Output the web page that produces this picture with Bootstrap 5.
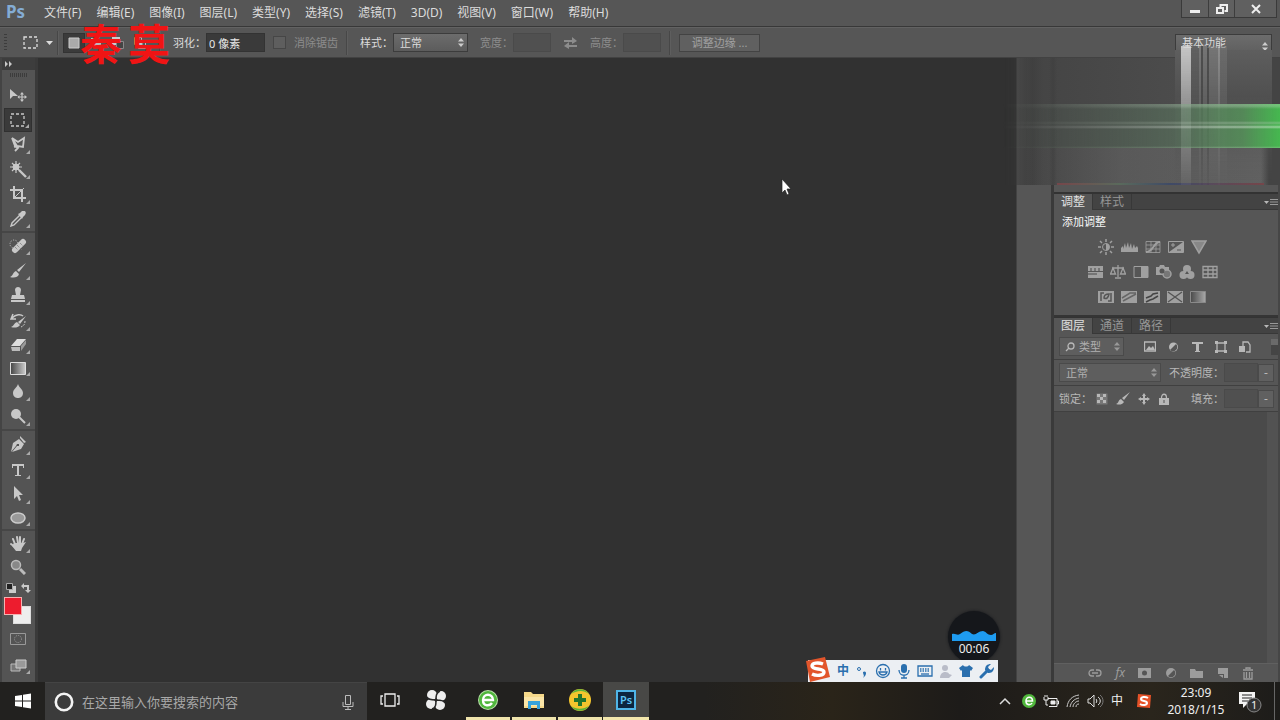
<!DOCTYPE html>
<html lang="zh-CN">
<head>
<meta charset="utf-8">
<meta name="viewport" content="width=device-width, initial-scale=1">
<title>Ps</title>
<link href="https://cdn.jsdelivr.net/npm/bootstrap@5.3.0/dist/css/bootstrap.min.css" rel="stylesheet">
<style>
:root{--ui:#565656;--edge:#333;--ink:#dcdcdc;--dim:#8c8c8c}
body{font:12px/16px "Noto Sans","Noto Sans CJK SC",sans-serif;color:var(--ink);background:#313131}
button,input,select{font:inherit;color:inherit}
button{background:none;border:0;padding:0}
svg{display:block;flex:none}
:where(svg:not([fill])){fill:none}
.i{fill:currentColor}
.l{stroke:currentColor;stroke-width:1.3}
a{color:inherit;text-decoration:none}
/* menu bar */
.menubar{height:27px;background:var(--ui);border-bottom:1px solid #383838}
.logo-ps{font:bold 17px/24px "Noto Sans",sans-serif;color:#84acd4;width:36px;padding-left:6px}
.menus{gap:15px;padding-top:5px}
.winbtns{height:18px;border:1px solid #3a3a3a;border-top:0;margin-right:3px;color:#eee;background:#606060}
.winbtns button{width:26px;height:17px}
.winbtns button+button{border-left:1px solid #3d3d3d}
.winbtns button:last-child{width:42px}
/* options bar */
.options{height:31px;background:var(--ui);border-top:1px solid #626262;border-bottom:1px solid #424242}
.grip{width:3px;height:18px;background:repeating-linear-gradient(#3c3c3c 0 1px,transparent 1px 3px)}
.vsep{width:2px;height:24px;background:#474747;border-right:1px solid #5e5e5e}
.mode{width:22px;height:20px}
.mode.on{background:#3b3b3b;border:1px solid #333}
.dark-in{background:#3a3a3a;border:1px solid #333;height:19px;padding:0 2px;color:#e8e8e8;min-width:0}
.dark-in:disabled{background:#505050;border-color:#4a4a4a}
.sel{appearance:none;height:19px;border:1px solid #3c3c3c;padding:0 6px;line-height:16px;background:url("data:image/svg+xml,%3Csvg xmlns='http://www.w3.org/2000/svg' width='6' height='9'%3E%3Cpath d='M0 3.500l3-3.500 3 3.500zM0 5.500h6l-3 3.500z' fill='%23ccc'/%3E%3C/svg%3E") no-repeat right 3px center,linear-gradient(#6c6c6c,#5c5c5c)}
.sel.soft{color:#b0b0b0;border-color:#4a4a4a;background:url("data:image/svg+xml,%3Csvg xmlns='http://www.w3.org/2000/svg' width='6' height='9'%3E%3Cpath d='M0 3.500l3-3.500 3 3.500zM0 5.500h6l-3 3.500z' fill='%23999'/%3E%3C/svg%3E") no-repeat right 3px center,#5e5e5e}
.tick{appearance:none;width:13px;height:13px;background:#5e5e5e;border:1px solid #464646}
.off{color:var(--dim)}
.fs-11{font-size:11px}
.swap{margin:0 13px}
.refine{width:81px;height:18px;border:1px solid #434343;background:#606060;color:#a0a0a0;font-size:11px;line-height:15px}
/* watermark */
.stamp{left:80px;top:10px;font:bold 42px/64px "Noto Sans CJK SC",sans-serif;color:#f01414;pointer-events:none;z-index:5;gap:6px}
/* tool column */
.tools{width:38px;background:#545454;border-left:2px solid #444;border-right:3px solid #3a3a3a;color:#c8c8c8}
.tools-top{height:12px;background:#3d3d3d}
.tools-grip{width:18px;height:4px;margin:3px auto 6px;background:repeating-linear-gradient(90deg,#3c3c3c 0 1px,transparent 1px 2px)}
.tg{border-bottom:2px solid #464646}
.tg button,.tool{position:relative;width:28px;margin-left:2px;display:flex;align-items:center;justify-content:center}
.tg button::after,.tool.more::after{content:"";position:absolute;right:2px;bottom:3px;border:2px solid transparent;border-right-color:#aaa;border-bottom-color:#aaa}
.tg .plain::after{display:none}
.tg button.on{background:#3a3a3a;border:1px solid #303030}
.g6{height:150px}.g8{height:198px}.g4{height:100px}.g2{height:48px;border:0}
.swatches{height:28px;width:32px}
.fore,.back{position:absolute;width:18px;height:18px;border:1px solid #ddd}
.fore{left:2px;top:0;background:#ed1c2e;border-color:#f6b0b0;z-index:1}
.back{left:11px;top:9px;background:#eee}
/* canvas */
.canvas{background:#313131;min-width:0}
.pointer{left:743px;top:120px}
.timer{right:16px;bottom:19px;width:52px;height:52px;border-radius:50%;background:#15171b;box-shadow:0 0 3px #15171b;color:#eee;text-align:center;padding-top:20px}
.ime{right:18px;bottom:0;height:22px;width:190px;background:#eceff3;color:#2a6fae;padding-left:26px;padding-right:1px}
.ime-logo{left:-5px;top:-4px}
/* dock */
.strip{width:38px;background:#565656;border-left:1px solid #424242;border-right:3px solid #3a3a3a}
.dock{width:226px;background:var(--ui);border-right:2px solid #464646;color:#b8b8b8}
.top-panel{height:135px;border-bottom:1px solid #333}
.tabs{height:17px;background:#434343;border-top:1px solid #333;border-bottom:1px solid #383838}
.tabs button{height:16px;padding:0 7px;color:#969696;line-height:16px;border-right:1px solid #383838}
.tabs button.on{background:var(--ui);color:#e0e0e0}
.adjust{height:107px;border-bottom:2px solid #353535;gap:9px}
.adj-icons{gap:7px;height:16px;margin-right:28px;color:#a0a0a0}
.prow{height:26px;border-bottom:1px solid #404040;padding-left:5px}
.drop{width:16px;height:18px;border:1px solid #4a4a4a;background:#606060}
.switch-v{width:7px;height:16px;background:linear-gradient(#6a6a6a 40%,#454545 40%)}
.list{background:#4a4a4a;border-right:11px solid #525252}
.pfoot{height:19px;border-top:1px solid #606060;color:#9c9c9c;padding:0 24px 0 34px}
/* streaked screen area */
.streak{right:0;top:58px;width:277px;height:127px;z-index:3;pointer-events:none;
background:
 linear-gradient(90deg,#75464a,#5a6a5c 30%,#3f4a66 55%,#75464a) 54px 125px/207px 2px no-repeat,
 linear-gradient(90deg,transparent 0 46px,rgba(60,60,60,.5) 50px,transparent 54px),
 linear-gradient(90deg,transparent 258px,#444 266px) no-repeat,
 linear-gradient(90deg,transparent 20px,rgba(120,120,120,.35) 120px) 0 90px/100% 37px no-repeat,
 linear-gradient(90deg,#313131 0,#454545 40px,#4c4c4c 180px,#565656);
-webkit-mask-image:linear-gradient(90deg,transparent,#000 30px);mask-image:linear-gradient(90deg,transparent,#000 30px)}
.bars{right:53px;top:46px;width:46px;height:139px;z-index:4;pointer-events:none;
background:linear-gradient(90deg,rgba(215,215,215,.85) 0 10px,rgba(100,100,100,.3) 10px 18px,rgba(160,160,160,.4) 18px 20px,rgba(60,60,60,.5) 20px 22px,rgba(150,150,150,.4) 22px 26px,rgba(60,60,60,.5) 26px 28px,rgba(150,150,150,.4) 28px 37px,rgba(190,190,190,.5) 37px 39px,rgba(120,120,120,.5) 39px);
-webkit-mask-image:linear-gradient(#000,rgba(0,0,0,.5) 50%,rgba(0,0,0,.08));mask-image:linear-gradient(#000,rgba(0,0,0,.5) 50%,rgba(0,0,0,.08))}
.glow{right:0;top:104px;width:277px;height:44px;z-index:4;pointer-events:none;
background:linear-gradient(rgba(210,230,210,.3) 0 2px,transparent 5px 17px,rgba(180,200,180,.4) 19px,transparent 21px,rgba(230,240,230,.5) 23px,transparent 25px 42px,rgba(170,210,170,.4)),linear-gradient(90deg,rgba(80,110,80,.3),rgba(90,115,95,.65) 60px,rgba(90,120,95,.7) 170px,rgba(85,150,90,.8) 240px,#46b850);
-webkit-mask-image:linear-gradient(90deg,transparent,#000 220px);mask-image:linear-gradient(90deg,transparent,#000 220px)}
.workspace-sel{width:97px;height:23px;padding-bottom:7px;border-bottom:0}
.workspace-tail{right:8px;top:50px;width:97px;height:130px;z-index:3;background:linear-gradient(#5e5e5e,#505050 35%,rgba(95,95,95,.3));-webkit-mask-image:linear-gradient(#000 50%,transparent);mask-image:linear-gradient(#000 50%,transparent)}
/* taskbar */
.taskbar{height:38px;background:linear-gradient(90deg,#22211f 0 55%,#2a2419 65%,#1d1b19 75%,#2a251c 90%,#1d1c1a);color:#f0f0f0}
.start{width:45px}
.search{width:322px;background:#3b3b3b;border-top:1px solid #444;padding:0 10px 0 9px;gap:8px}
.search input{background:none;border:0;font-size:13px;min-width:0;outline:0;padding:0}
.search input::placeholder{color:#a8a8a8;opacity:1}
.app{width:46px;border-bottom:3px solid transparent}
.pinned{margin-right:6px}
.app.open{border-image:linear-gradient(90deg,transparent 4px,#efe3ab 4px 42px,transparent 42px) 3}
.app.on{background:#484846;border-bottom-color:#f3e7ac}
.app-ps{width:20px;height:20px;background:#0c2540;border:2px solid #4fb5e8;color:#5cc4f6;font-weight:600;font-size:11px;line-height:15px}
.tray{padding-right:5px}
.tray-ico{width:22px}
.notes{margin:0 12px 0 4px}
.peek{width:1px;background:#666}
.clock{width:76px;line-height:17px}
</style>
</head>
<body class="vh-100 d-flex flex-column overflow-hidden position-relative">
<header class="menubar d-flex align-items-start">
 <span class="logo-ps">Ps</span>
 <nav class="menus d-flex flex-fill ps-2 text-nowrap" aria-label="菜单">
  <a href="#">文件(F)</a><a href="#">编辑(E)</a><a href="#">图像(I)</a><a href="#">图层(L)</a><a href="#">类型(Y)</a><a href="#">选择(S)</a><a href="#">滤镜(T)</a><a href="#">3D(D)</a><a href="#">视图(V)</a><a href="#">窗口(W)</a><a href="#">帮助(H)</a>
 </nav>
 <div class="winbtns d-flex">
  <button aria-label="最小化"><svg class="i mx-auto" width="12" height="12"><path d="M1 7h10v3H1z"/></svg></button>
  <button aria-label="还原"><svg class="mx-auto" width="12" height="12" stroke="currentColor" stroke-width="2"><path d="M4.500 4V2H11v6H8.500M1 5h6v5H1z"/></svg></button>
  <button aria-label="关闭"><svg class="mx-auto" width="12" height="12" stroke="currentColor" stroke-width="2"><path d="M2 2l8 8M10 2l-8 8"/></svg></button>
 </div>
</header>

<div class="options d-flex align-items-center text-nowrap">
 <span class="grip ms-1"></span>
 <svg class="ms-3 l" width="15" height="13"><rect x="1" y="1" width="13" height="11" stroke-dasharray="3 2"/></svg>
 <svg class="i ms-2" width="7" height="4"><path d="M0 0h7L3.500 4z"/></svg>
 <span class="vsep ms-1 me-1"></span>
 <button class="mode on" aria-label="新选区"><svg class="mx-auto" width="12" height="12"><path d="M1 1h10v10H1z" fill="#aaa" stroke="#ccc"/></svg></button>
 <button class="mode" aria-label="添加"><svg class="mx-auto" width="12" height="12"><path d="M1 1h7v3h3v7H4V8H1z" fill="#bbb"/></svg></button>
 <button class="mode" aria-label="减去"><svg class="mx-auto" width="12" height="12"><path d="M0 0h8v4H4v4H0z" fill="#ccc"/><path d="M4.500 4.500h7v7h-7z" fill="#444" stroke="#888"/></svg></button>
 <button class="mode" aria-label="交叉"><svg class="mx-auto" width="12" height="12" stroke="#bbb"><path d="M.5.500h7v7h-7zM4.500 4.500h7v7h-7z"/><path d="M4 4h4v4H4z" fill="#ccc"/></svg></button>
 <span class="vsep ms-2 me-2"></span>
 <label for="feather" class="ps-1 fs-11">羽化：</label>
 <input id="feather" class="dark-in fs-11" value="0 像素" style="width:59px">
 <input id="aa" type="checkbox" class="tick ms-2" disabled><label for="aa" class="off fs-11 ms-1 ps-1">消除锯齿</label>
 <span class="vsep ms-2 me-2"></span>
 <label for="style" class="fs-11 ps-1">样式：</label>
 <select id="style" class="sel fs-11" style="width:75px"><option>正常</option></select>
 <label for="w" class="off ms-2 ps-1 fs-11">宽度：</label><input id="w" class="dark-in" style="width:38px" disabled>
 <svg class="off i swap" width="13" height="12"><path d="M0 3h8V0l5 4-5 3V5H0zM13 8H5V5L0 9l5 3v-2h8z"/></svg>
 <label for="h" class="off fs-11">高度：</label><input id="h" class="dark-in" style="width:38px" disabled>
 <span class="vsep ms-2 me-2"></span>
 <button class="refine">调整边缘 ...</button>
 <select class="sel workspace-sel fs-11 ms-auto me-2 align-self-end" aria-label="工作区"><option>基本功能</option></select>
</div>
<div class="stamp position-absolute d-flex"><span>秦</span><span>莫</span></div>

<main class="d-flex flex-fill" style="min-height:0">
 <aside class="tools d-flex flex-column">
  <div class="tools-top"><svg class="i" width="12" height="12"><path d="M3 3l3 3-3 3zM7 3l3 3-3 3z"/></svg></div>
  <div class="tools-grip"></div>
  <div class="tg g6 d-flex flex-column">
   <button class="plain flex-fill" aria-label="移动"><svg class="i" width="18" height="16"><path d="M1 2v10l3-3h5z"/><path d="M13 5l2 2.500h-1.400v2h2V8L18 10l-2.400 2v-1.400h-2v2H15L13 15l-2-2.400h1.400v-2h-2V12L8.500 10l1.900-2v1.500h2v-2H11z"/></svg></button>
   <button class="on flex-fill" aria-label="矩形选框"><svg class="l" width="16" height="14"><rect x="1" y="1" width="13" height="12" stroke-dasharray="3 2"/></svg></button>
   <button class="flex-fill" aria-label="套索"><svg width="16" height="16" stroke="currentColor" stroke-width="1.800"><path d="M2 2l6 4 6-4-1 9-6-1zM2 2l3 8 3 2-3 3M7 10l-3 1"/></svg></button>
   <button class="flex-fill" aria-label="魔棒"><svg width="17" height="17" stroke="currentColor"><circle cx="6" cy="6" r="3" fill="currentColor"/><path stroke-width="1.200" d="M6 0v12M0 6h12M2 2l8 8M10 2l-8 8"/><path stroke-width="2.400" d="M9 9l7 7"/></svg></button>
   <button class="flex-fill" aria-label="裁剪"><svg width="16" height="16" stroke="currentColor" stroke-width="2"><path d="M4 0v12h12M0 4h12v12"/><path d="M5 11l9-9" stroke-width="1"/></svg></button>
   <button class="flex-fill" aria-label="吸管"><svg width="16" height="16"><path d="M10 4L2 12l-1 3 3-1 8-8" stroke="currentColor" stroke-width="1.400"/><path class="i" d="M8 3l2-1 2-2c3-1 5 1 3 4l-2 2-1 2z"/></svg></button>
  </div>
  <div class="tg g8 d-flex flex-column">
   <button class="flex-fill" aria-label="修复画笔"><svg width="18" height="16"><circle cx="5" cy="6" r="4" stroke="currentColor" stroke-dasharray="1 1.500"/><path d="M6 12l8-8" stroke="currentColor" stroke-width="6" stroke-linecap="round"/><path d="M8 7l5 5M11 5l3 3M6 9l3 3" stroke="#777" stroke-dasharray="1 1"/></svg></button>
   <button class="flex-fill" aria-label="画笔"><svg class="i" width="18" height="15"><path d="M17 0L10 9 8 7zM7 8l3 3c-1 4-6 4-9 3 3-1 3-5 6-6z"/></svg></button>
   <button class="flex-fill" aria-label="图章"><svg class="i" width="16" height="16"><path d="M6 8L5 3c0-4 6-4 6 0l-1 5h4l1 4H1l1-4zM1 13h14v2H1z"/></svg></button>
   <button class="flex-fill" aria-label="历史画笔"><svg width="17" height="16"><path d="M2 5c4-4 9-4 11-2M3 1L1 6h5" stroke="currentColor" stroke-width="1.500"/><path class="i" d="M16 3l-6 8-2-2zM7 9l3 3c-2 3-6 3-9 2 3-1 3-4 6-5z"/><path d="M15 8c0 4-2 5-4 6" stroke="currentColor" stroke-dasharray="2 1"/></svg></button>
   <button class="flex-fill" aria-label="橡皮擦"><svg width="17" height="14"><path d="M7 1h9l-6 7H1z" fill="#ddd"/><path d="M1 9h9v4H2z" fill="#bbb"/><path d="M11 8l5-6v4l-5 7z" fill="#999"/></svg></button>
   <button class="flex-fill" aria-label="渐变"><svg width="16" height="13"><defs><linearGradient id="gr"><stop stop-color="#444"/><stop offset="1" stop-color="#ccc"/></linearGradient></defs><path d="M.5.500h15v12H.5z" fill="url(#gr)" stroke="#ddd"/></svg></button>
   <button class="flex-fill" aria-label="模糊"><svg class="i" width="14" height="15"><path d="M7 0c1 4 5 5 5 9s-3 5-5 5-5-1-5-5 4-5 5-9z"/></svg></button>
   <button class="flex-fill" aria-label="减淡"><svg class="i" width="16" height="16"><circle cx="6" cy="6" r="5"/><path d="M9 9l6 6" stroke="currentColor" stroke-width="2"/></svg></button>
  </div>
  <div class="tg g4 d-flex flex-column">
   <button class="flex-fill" aria-label="钢笔"><svg class="i" width="17" height="17"><path d="M10 0l6 6-2 1-4-5z"/><path d="M9 3l5 5-3 5-9 3 5-6 2 0 0-2-2 0-1 2-5 6 2-9z"/></svg></button>
   <button class="flex-fill" aria-label="文字"><svg class="i" width="14" height="14"><rect x="1" y="1" width="12" height="2"/><rect x="6" y="1" width="2" height="12"/><rect x="4" y="12" width="6" height="1"/><rect x="1" y="1" width="1" height="4"/><rect x="12" y="1" width="1" height="4"/></svg></button>
   <button class="flex-fill" aria-label="路径选择"><svg class="i" width="12" height="16"><path d="M2 0l9 9H7l2 5-2 1-2-5-3 3z"/></svg></button>
   <button class="flex-fill" aria-label="椭圆"><svg width="16" height="12"><ellipse cx="8" cy="6" rx="7" ry="5" fill="#999" stroke="#ccc" stroke-width="1.500"/></svg></button>
  </div>
  <div class="tg g2 d-flex flex-column">
   <button class="flex-fill" aria-label="抓手"><svg width="17" height="17"><g stroke="currentColor" stroke-width="2" stroke-linecap="round"><path d="M5 9L3 4M8 8L7 2M10 8V2M12 9l2-5M5 12L1 9"/></g><path class="i" d="M4 8h9l3-1-4 6-1 3H6l-4-5z"/></svg></button>
   <button class="plain flex-fill" aria-label="缩放"><svg width="16" height="16"><circle cx="6" cy="6" r="4.500" fill="#888" stroke="#bbb" stroke-width="1.500"/><path d="M10 10l5 5" stroke="#bbb" stroke-width="3"/></svg></button>
  </div>
  <div class="d-flex justify-content-between px-1 pt-1 pb-1" style="height:18px"><svg width="10" height="10"><path d="M3 3h7v7H3z" fill="#ccc"/><path d="M.5.500h6v6h-6z" fill="#222" stroke="#aaa"/></svg><svg class="i" width="10" height="10"><path d="M0 3l3-3v2h5v5h2l-3 3-3-3h2V4H3v2z"/></svg></div>
  <div class="swatches position-relative"><button class="fore" aria-label="前景色"></button><button class="back" aria-label="背景色"></button></div>
  <button class="tool" style="height:28px" aria-label="快速蒙版"><svg width="16" height="12" stroke="#999"><path d="M.5.500h15v11H.5z"/><circle cx="8" cy="6" r="3.500" stroke-dasharray="1 1"/></svg></button>
  <button class="tool more" style="height:24px" aria-label="屏幕模式"><svg width="17" height="13"><path d="M1 5h9v7H1z" fill="#777" stroke="#bbb"/><path d="M6 1h10v8H6z" fill="#999" stroke="#ccc"/></svg></button>
 </aside>

 <section class="canvas flex-fill position-relative">
  <svg class="pointer position-absolute" width="12" height="18"><path d="M1 1v14l3-3 2 5 2-1-2-5h4z" fill="#fff" stroke="#222" stroke-width=".7"/></svg>
  <div class="timer position-absolute"><svg class="mx-auto" width="44" height="10"><path d="M0 3c4-1 5 2 8 0 5-4 8-4 12 0 4 2 6-3 11-3 4 1 4 4 8 4 2 0 3-2 5-2v8H0z" fill="#1e9bf0"/></svg><span class="d-block">00:06</span></div>
  <div class="ime position-absolute d-flex align-items-center justify-content-around">
   <svg class="ime-logo position-absolute" width="28" height="27"><path d="M3 5L22 1l5 20-20 5z" fill="#e2552b"/><path d="M20 8c-5-2-11-1-11 2 0 4 12 2 12 6 0 4-8 4-12 2" stroke="#fff" stroke-width="3.400"/></svg>
   <b>中</b>
   <svg width="14" height="14"><circle cx="4" cy="5" r="1.500" stroke="currentColor"/><path d="M8 8c3-2 5 2 0 6 2-3 0-3 0-6z" class="i"/></svg>
   <svg class="l" width="16" height="16"><circle cx="8" cy="8" r="6.500"/><path d="M5.500 5v2.500M10.500 5v2.500M4 9c1 4 7 4 8 0z"/></svg>
   <svg width="14" height="16"><rect x="4" y="1" width="6" height="9" rx="3" class="i"/><path class="l" d="M2 7c0 7 10 7 10 0M7 12v3M4 15h6"/></svg>
   <svg width="16" height="12"><path class="l" d="M1 1h14v10H1z"/><path d="M3 4h10M3 6h10" stroke="currentColor" stroke-width="1.400" stroke-dasharray="1.500 1"/><path class="l" d="M4 9h8"/></svg>
   <svg width="14" height="15" fill="#b9bcc8"><circle cx="6" cy="4" r="3"/><path d="M1 14c0-7 8-7 9-4l3 1-3 3z"/></svg>
   <svg class="i" width="14" height="14"><path d="M4 1c1 2 5 2 6 0l4 3-2 3-1-1v7H3V6L2 7 0 4z"/></svg>
   <svg width="15" height="15"><path d="M2 13l7-7" stroke="currentColor" stroke-width="3" stroke-linecap="round"/><path class="i" d="M12 0L9 3l1 2 2 1 3-3c0 5-3 6-6 6L6 6c0-4 2-6 6-6z"/></svg>
  </div>
 </section>
 <div class="strip"></div>

 <aside class="dock d-flex flex-column">
  <div class="top-panel flex-shrink-0"></div>
  <div class="tabs d-flex flex-shrink-0"><button class="on">调整</button><button>样式</button><svg class="ms-auto mt-1" width="14" height="8"><path d="M0 3h5L2.500 6z" class="i"/><path d="M6 1.500h8M6 4h8M6 6.500h8" stroke="#999"/></svg></div>
  <div class="adjust flex-shrink-0 d-flex flex-column">
   <div class="ps-2 pt-1 text-light fs-11">添加调整</div>
   <div class="adj-icons d-flex justify-content-center">
    <svg width="16" height="16"><circle cx="8" cy="8" r="3.500" stroke="currentColor"/><path class="i" d="M8 4.500a3.500 3.500 0 010 7z"/><path d="M8 0v3M8 13v3M0 8h3M13 8h3M2 2l2 2M12 12l2 2M14 2l-2 2M2 14l2-2" stroke="currentColor" stroke-width="1.500"/></svg>
    <svg class="i" width="17" height="16"><path d="M0 13V9l2-2v3l2-6 1 5 2-6 1 6 2-5 1 6 2-5 1 4 2-2 1 2v4z"/></svg>
    <svg width="16" height="16" stroke="currentColor"><path d="M1 2.500h14v11H1zM1 6h14M1 10h14M6 2v12M11 2v12" stroke-width=".8"/><path d="M1 13c8 0 7-10 14-10" stroke-width="2"/></svg>
    <svg width="16" height="16"><path d="M.5 2.500h15v11H.5z" stroke="currentColor"/><path class="i" d="M15 3v10H1z"/><path d="M3 6h4M5 4v4" stroke="currentColor"/><path d="M9 11h4" stroke="#555"/></svg>
    <svg width="16" height="16"><path d="M1 2h14L8 14z" fill="#888" stroke="currentColor" stroke-width="1.500"/></svg>
   </div>
   <div class="adj-icons d-flex justify-content-center">
    <svg class="i" width="16" height="16"><path d="M1 2h15v5H1zM1 8h15v6H1z"/><path d="M4 4v3M8 4v3M12 4v3M1 10h9" stroke="#666" stroke-width="1.500"/></svg>
    <svg class="l" width="16" height="16"><path d="M8 1v12M2 4h12M5 14h6M3 4l-2.500 6h5zM13 4l-2.500 6h5z"/></svg>
    <svg width="16" height="16"><path d="M1 2.500h14v11H1z" stroke="currentColor"/><path class="i" d="M8 2h7v12H8z"/></svg>
    <svg width="16" height="16"><path class="i" d="M0 3h3l1-2h4l1 2h4v8H0z"/><circle cx="11" cy="10" r="4" stroke="currentColor" fill="#777" stroke-width="1.500"/><circle cx="6" cy="7" r="2.500" fill="#555"/></svg>
    <svg class="i" width="16" height="16"><circle cx="8" cy="5" r="4"/><circle cx="4.500" cy="11" r="4"/><circle cx="11.500" cy="11" r="4"/><path d="M8 7l2 3H6z" fill="#555"/></svg>
    <svg class="l" width="16" height="16"><path d="M1 2.500h14v11H1zM1 6h14M1 10h14M6 2v12M11 2v12"/></svg>
   </div>
   <div class="adj-icons d-flex justify-content-center">
    <svg width="16" height="16"><path class="i" d="M0 2h16v12H0z"/><path d="M3 12V4h3M13 4v8h-3M6 9c0-4 3-4 5-4-1 5-3 5-5 4z" stroke="#555" stroke-width="1.500"/></svg>
    <svg width="16" height="16"><path class="i" d="M0 2h16v12H0z"/><path d="M1 9l8-5h6M2 12l13-7" stroke="#666" stroke-width="1.500"/></svg>
    <svg width="16" height="16"><path class="i" d="M0 2h16v12H0z"/><path d="M2 9l5-2 2-2 5-1M2 13l4-2 3-1 5-3" stroke="#444" stroke-width="1.500"/></svg>
    <svg width="16" height="16"><path class="i" d="M0 2h16v12H0z"/><path d="M1 3l7 5 7-5M1 13l7-5 7 5" stroke="#555" stroke-width="1.400"/></svg>
    <svg width="16" height="16"><path d="M.5 2.500h15v11H.5z" fill="url(#gr)" stroke="currentColor" opacity=".7"/></svg>
   </div>
  </div>
  <div class="tabs d-flex flex-shrink-0"><button class="on">图层</button><button>通道</button><button>路径</button><svg class="ms-auto mt-1" width="14" height="8"><path d="M0 3h5L2.500 6z" class="i"/><path d="M6 1.500h8M6 4h8M6 6.500h8" stroke="#999"/></svg></div>
  <div class="prow d-flex align-items-center flex-shrink-0">
   <div class="position-relative"><select class="sel soft fs-11" style="width:65px;padding-left:19px" aria-label="类型"><option>类型</option></select><svg class="position-absolute l" style="left:6px;top:5px" width="10" height="10"><circle cx="6" cy="4" r="3"/><path d="M4 6L1 9"/></svg></div>
   <div class="d-flex align-items-center justify-content-between ps-3 pe-3 me-1 flex-fill ms-1">
    <svg width="12" height="12"><path class="l" d="M.5 1h11v9H.5z"/><path class="i" d="M2 9l3-4 2 2 2-2 2 4z"/></svg>
    <svg width="11" height="12"><circle cx="5.500" cy="6" r="4.500" class="i"/><path d="M2 9l6-6a4 4 0 01-6 6z" fill="#555"/></svg>
    <svg class="i" width="11" height="12"><rect y="1" width="11" height="2"/><rect x="4" y="1" width="3" height="10"/><rect x="3" y="10" width="5" height="1"/></svg>
    <svg width="12" height="12"><path class="l" d="M2 2h8v8H2z"/><path class="i" d="M0 0h3v3H0zM9 0h3v3H9zM0 9h3v3H0zM9 9h3v3H9z"/></svg>
    <svg width="12" height="12"><path class="l" d="M4 5V1h5l2 3v7H7"/><path class="i" d="M0 5h6v6H0z"/></svg>
   </div>
   <span class="switch-v"></span>
  </div>
  <div class="prow d-flex align-items-center flex-shrink-0 text-nowrap">
   <select class="sel soft fs-11 flex-shrink-0" style="width:102px" aria-label="混合模式"><option>正常</option></select>
   <label for="op" class="ms-2 fs-11">不透明度：</label><input id="op" class="dark-in flex-fill w-25" disabled><button class="drop me-1 flex-shrink-0" aria-label="打开">-</button>
  </div>
  <div class="prow d-flex align-items-center flex-shrink-0">
   <span class="fs-11 me-1">锁定：</span>
   <div class="d-flex gap-2 align-items-center">
    <svg width="12" height="12"><path d="M.5.500h11v11H.5z" fill="#777"/><path class="i" d="M1 1h3v3H1zM7 1h3v3H7zM4 4h3v3H4zM1 7h3v3H1zM7 7h3v3H7z"/></svg>
    <svg class="i" width="14" height="13"><path d="M14 0L8 8 6 6zM5 7l3 3c-2 3-5 3-8 2 3-1 2-4 5-5z"/></svg>
    <svg class="i" width="12" height="12"><path d="M6 0l2 3H7v2h2V4l3 2-3 2V7H7v2h1l-2 3-2-3h1V7H3v1L0 6l3-2v1h2V3H4z"/></svg>
    <svg width="12" height="12"><path class="i" d="M1 5h10v7H1z"/><path class="l" d="M3.500 5c0-5 5-5 5 0"/><path d="M6 7v3" stroke="#555"/></svg>
   </div>
   <label for="fill" class="ms-auto fs-11">填充：</label><input id="fill" class="dark-in" style="width:34px" disabled><button class="drop me-1" aria-label="打开">-</button>
  </div>
  <div class="list flex-fill"></div>
  <div class="pfoot d-flex align-items-center justify-content-between flex-shrink-0">
   <svg class="l" width="14" height="12"><path d="M6 3H4a3 3 0 000 6h2M8 3h2a3 3 0 010 6H8M4 6h6"/></svg>
   <i>fx</i>
   <svg width="13" height="12"><path class="i" d="M0 1h13v10H0z"/><circle cx="6.500" cy="6" r="2.500" fill="#555"/></svg>
   <svg width="12" height="12"><circle cx="6" cy="6" r="5" class="i"/><path d="M3 9l6-6a4 4 0 01-6 6z" fill="#555"/></svg>
   <svg class="i" width="13" height="12"><path d="M0 2h5l1 2h7v7H0z"/></svg>
   <svg class="i" width="12" height="12"><path d="M1 1h10v10H7V7H1z"/><path d="M2 8h4v3z"/></svg>
   <svg width="12" height="13"><path class="l" d="M1 3h10M4 2V1h4v1M2 5v7h8V5M4.500 5v6M7.500 5v6"/></svg>
  </div>
 </aside>
</main>
<div class="streak position-absolute"></div>
<div class="workspace-tail position-absolute"></div>
<div class="bars position-absolute"></div>
<div class="glow position-absolute"></div>

<footer class="taskbar d-flex flex-shrink-0">
 <button class="start" aria-label="开始"><svg class="mx-auto" width="16" height="16" fill="#fff"><path d="M0 3l7-1v5.500H0zM8 1.700L16 .5v7H8zM0 8.500h7V14l-7-1zM8 8.500h8v7L8 14.300z"/></svg></button>
 <div class="search d-flex align-items-center"><svg width="20" height="20"><circle cx="10" cy="10" r="8.200" stroke="#f4f4f4" stroke-width="2.600"/></svg><input class="flex-fill" placeholder="在这里输入你要搜索的内容" aria-label="搜索"><svg width="18" height="18" stroke="#bbb"><path d="M6.500 2.500h5v9h-5zM4 9v4.500h10V9M9 14v3M6 16.500h6"/></svg></div>
 <button class="app" aria-label="任务视图"><svg class="mx-auto" width="20" height="16" stroke="#eee" stroke-width="1.300"><path d="M5 2h10v12H5zM3 4H1v8h2M17 4h2v8h-2"/></svg></button>
 <button class="app pinned" aria-label="应用"><svg class="mx-auto" width="22" height="22"><g fill="#eee"><circle cx="7" cy="6" r="5"/><circle cx="16" cy="7" r="5"/><circle cx="6" cy="15" r="5"/><circle cx="15" cy="16" r="5"/></g><path d="M11 11c-4 0-8 0-9-3M11 11c0-4 0-7 4-9M11 11c4 0 8 0 9 3M11 11c0 4 0 8-4 9" stroke="#262626" stroke-width="1.500"/></svg></button>
 <button class="app open" aria-label="浏览器"><svg class="mx-auto" width="22" height="22"><circle cx="11" cy="11" r="10" fill="#b8e0a8"/><circle cx="11" cy="11" r="9" fill="#50b63c"/><path d="M6 11h10c0-7-10-7-10 0s7 6 9 3" stroke="#fff" stroke-width="2.400"/></svg></button>
 <button class="app open" aria-label="文件资源管理器"><svg class="mx-auto" width="22" height="20"><path d="M1 2h7l2 2h11v14H1z" fill="#f6d98a"/><path d="M1 7h20v9H1z" fill="#fbe6a8"/><path d="M5 19v-8h12v8h-3v-4H8v4z" fill="#36a3dc"/></svg></button>
 <button class="app open" aria-label="安全"><svg class="mx-auto" width="24" height="24"><circle cx="12" cy="12" r="11" fill="#f3c52e"/><path d="M3 6a11 11 0 0118 0C15 1 8 3 3 6zM21 18a11 11 0 01-18 0c6 4 13 3 18 0z" fill="#5cb53c"/><path d="M12 6v12M6 12h12" stroke="#23752d" stroke-width="4"/></svg></button>
 <button class="app on" aria-label="Photoshop"><span class="app-ps d-block mx-auto">Ps</span></button>
 <div class="tray d-flex align-items-center ms-auto">
  <svg width="24" height="12"><path d="M6 9l5-5 5 5" stroke="#ddd" stroke-width="1.500"/></svg>
  <span class="tray-ico"><svg class="mx-auto" width="14" height="14"><circle cx="7" cy="7" r="7" fill="#50b63c"/><path d="M4 7h6.500c0-5-6.500-5-6.500 0s5 4 6 2" stroke="#fff" stroke-width="1.600"/></svg></span>
  <span class="tray-ico"><svg class="mx-auto" width="16" height="13" stroke="#eee"><path d="M5 3.500h9v8H6M14 6h1.500v3H14M1 2v3h4V2M2 0v2M4 0v2M3 5v5h2"/><path d="M8 6h4v3H8z" fill="#eee"/></svg></span>
  <span class="tray-ico"><svg class="mx-auto" width="14" height="14" stroke="#ccc"><path d="M1 13C2 6 6 2 13 1M4 13c1-5 4-8 9-9M7 13c0-3 3-6 6-6M10 13c0-2 1-3 3-3"/></svg></span>
  <span class="tray-ico"><svg class="mx-auto" width="17" height="14" stroke="#ddd"><path d="M1 5h2l4-4v12L3 9H1zM9 5c1 1 1 3 0 4M11 3c3 2 3 6 0 8"/><path d="M13 1c4 3 4 9 0 12" stroke="#777"/></svg></span>
  <span class="tray-ico text-center">中</span>
  <span class="tray-ico me-2"><svg class="ms-2" width="16" height="16"><path d="M2 1l13 1-1 13-13-1z" fill="#e65228"/><path d="M12 5C9 3 5 4 5 6c0 3 6 1 6 4 0 2-4 3-7 1" stroke="#fff" stroke-width="2"/></svg></span>
  <div class="clock text-center"><div>23:09</div><div>2018/1/15</div></div>
  <button class="notes" aria-label="通知"><svg width="24" height="24"><path d="M1 3h16v12H9l-4 4v-4H1z" fill="#f4f4f4"/><path d="M4 6h10M4 9h10M4 12h6" stroke="#222"/><circle cx="16" cy="16" r="7" fill="#333" stroke="#888"/><text x="13" y="20" font-size="11" fill="#eee">1</text></svg></button>
  <span class="peek align-self-stretch"></span>
 </div>
</footer>
<script src="https://cdn.jsdelivr.net/npm/bootstrap@5.3.0/dist/js/bootstrap.bundle.min.js"></script>
</body>
</html>
